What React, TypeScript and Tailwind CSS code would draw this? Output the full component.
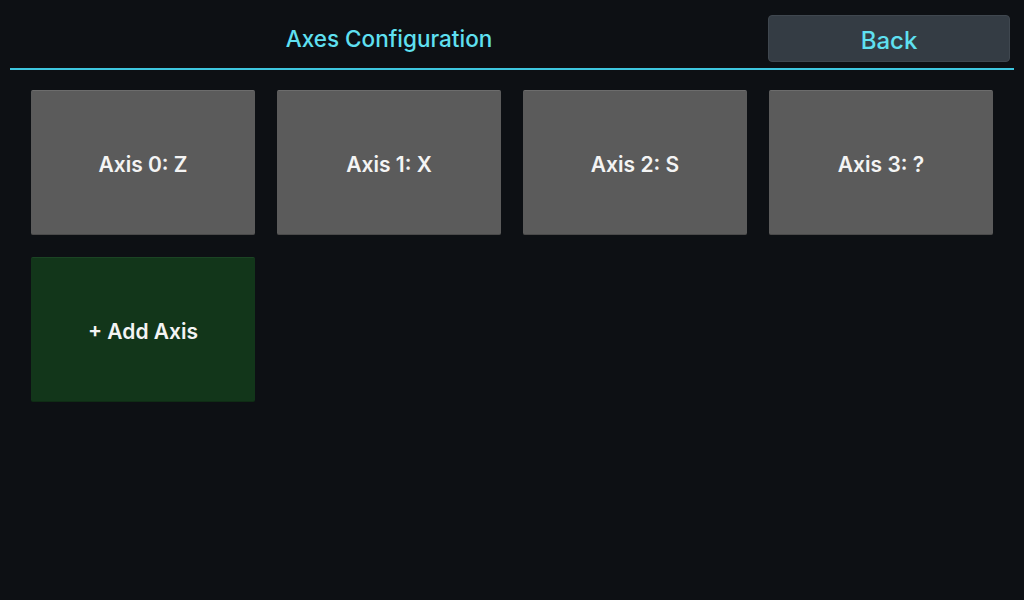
const axes = [
  { id: 0, name: "Z" },
  { id: 1, name: "X" },
  { id: 2, name: "S" },
  { id: 3, name: "?" },
];

export default function App() {
  return (
    <div
      className="w-[1024px] h-[600px] bg-[#0d1014] px-[10px] overflow-hidden"
      style={{ fontFamily: "Inter, 'Noto Sans', sans-serif" }}
    >
      {/* Header */}
      <div className="flex items-center h-[60px] pt-[8px] border-b-2 border-[#3ec6df] box-content">
        <h1 className="flex-1 text-center text-[22.5px] font-medium text-[#5fe0f1] pt-[2px]">
          Axes Configuration
        </h1>
        <button className="w-[242px] h-[47px] mr-[4px] pt-[5px] rounded-[4px] bg-[#343c44] border border-[#3f474f] text-[24px] font-medium text-[#5fe0f1]">
          Back
        </button>
      </div>

      {/* Axis grid */}
      <div className="grid grid-cols-4 gap-[22px] px-[21px] pt-[20px]">
        {axes.map((axis) => (
          <button
            key={axis.id}
            className="h-[145px] pt-[4px] rounded-[2px] bg-[#5b5b5b] border-t border-t-[#6c6c6c] border-b border-b-[#4a4a4a] text-[21px] font-semibold text-[#f4f4f4]"
          >
            Axis {axis.id}: {axis.name}
          </button>
        ))}
        <button className="h-[145px] pt-[4px] rounded-[2px] bg-[#12361a] border-t border-t-[#1b4424] border-b border-b-[#0f2c15] text-[21px] font-semibold text-[#f4f4f4]">
          + Add Axis
        </button>
      </div>
    </div>
  );
}
